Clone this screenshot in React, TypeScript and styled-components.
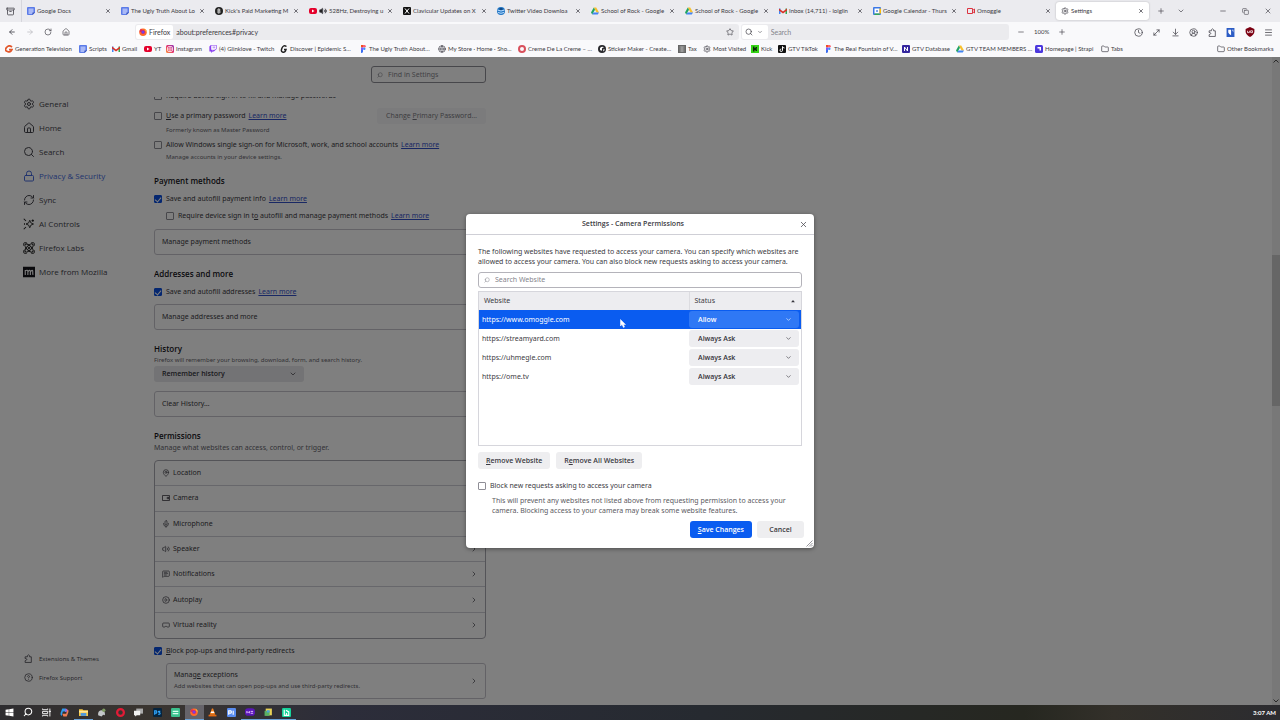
import React from "react";
import styled, { createGlobalStyle, css } from "styled-components";
import {
  ArrowLeft, ArrowRight, ArrowDownToLine, ChevronDown, ChevronRight, CirclePlay,
  CircleHelp, CircleUserRound, Clock, Folder, Globe, House, Lock, MapPin, Menu, Mic, Minus, Plus,
  RectangleGoggles, RotateCw, Search, Settings, Star, Copy, Volume2, X, Archive,
  MessageSquareText, RefreshCw, MoveDiagonal,
} from "lucide-react";
import { FaTwitch, FaWindows } from "react-icons/fa";

const Global = createGlobalStyle`
  * { box-sizing: border-box; }
  html, body { margin: 0; padding: 0; }
  body {
    font-family: "Noto Sans", "Open Sans", sans-serif;
    font-size: 7px;
    line-height: 10px;
    color: #3b3a42;
  }
  button, input, select, table { font: inherit; color: inherit; }
  button, input, select { margin: 0; }
  svg { display: block; flex: none; }
`;

const Window = styled.div`
  display: flex;
  flex-direction: column;
  height: 100vh;
  overflow: hidden;
  background: #fff;
`;

/* ---------- browser chrome ---------- */

const Chrome = styled.header`
  flex: none;
  font-family: Lato, "Open Sans", sans-serif;
`;
const TabStrip = styled.div`
  display: flex;
  align-items: center;
  height: 22px;
  background: #ebebef;
`;
const FirefoxView = styled.button`
  display: grid;
  place-items: center;
  width: 22px;
  height: 22px;
  padding: 0;
  border: 0;
  border-right: 1px solid #d6d6dc;
  background: none;
`;
const Tab = styled.div<{ $active?: boolean }>`
  display: flex;
  align-items: center;
  gap: 2px;
  flex: 0 1 94px;
  min-width: 0;
  height: 18px;
  padding: 0 5px;
  border-radius: 3px;
  font-size: 6px;
  ${(p) => p.$active && css`
    flex-basis: 93px;
    background: #fff;
    box-shadow: 0 0 2px rgba(0, 0, 0, 0.25);
  `}
`;
const TabTitle = styled.span`
  flex: 1;
  min-width: 0;
  white-space: nowrap;
`;
const PlainButton = styled.button`
  display: grid;
  place-items: center;
  padding: 0;
  border: 0;
  background: none;
  color: #45444c;
`;
const StripTools = styled.div<{ $gap: number; $push?: boolean }>`
  display: flex;
  align-items: center;
  gap: ${(p) => p.$gap}px;
  padding: 0 8px;
  margin-left: ${(p) => (p.$push ? "auto" : "0")};
`;

const NavBar = styled.div`
  display: flex;
  align-items: center;
  height: 20px;
  background: #f9f9fb;
`;
const NavButtons = styled.div`
  display: flex;
  align-items: center;
  gap: 10px;
  flex: none;
  width: 135px;
  padding-left: 8px;
`;
const AddressBar = styled.div`
  display: flex;
  align-items: center;
  flex: 606 1 0;
  min-width: 0;
  height: 16px;
  padding: 1px 5px 1px 1px;
  border-radius: 3px;
  background: #ebebee;
`;
const Identity = styled.button`
  display: flex;
  align-items: center;
  gap: 2px;
  height: 14px;
  padding: 0 3px;
  border: 0;
  border-radius: 2px;
  background: #fff;
`;
const BareInput = styled.input`
  flex: 1;
  min-width: 0;
  padding: 0 3px;
  border: 0;
  outline: 0;
  background: none;
  &::placeholder { color: #85848c; opacity: 1; }
`;
const SearchBar = styled(AddressBar)`
  flex: 266 1 0;
  margin-left: 2px;
`;
const Engine = styled(Identity)`
  width: 26px;
  gap: 4px;
`;
const NavTools = styled.div`
  display: flex;
  align-items: center;
  justify-content: space-between;
  flex: none;
  width: 271px;
  padding: 0 7px 0 8px;
`;
const Zoom = styled.div`
  display: flex;
  align-items: center;
  gap: 9px;
  font-size: 6px;
`;
const Extensions = styled.div`
  display: flex;
  align-items: center;
  justify-content: space-between;
  width: 139px;
`;

const BookmarkBar = styled.nav`
  display: flex;
  align-items: center;
  height: 15px;
  padding: 0 6px 1px 5px;
  background: #f9f9fb;
`;
const Bookmark = styled.a<{ $w: number; $last?: boolean }>`
  display: flex;
  align-items: center;
  gap: 2px;
  flex: 0 1 ${(p) => p.$w}px;
  min-width: 0;
  margin-left: ${(p) => (p.$last ? "auto" : "0")};
  font-size: 6px;
  color: #3b3a42;
  text-decoration: none;
  white-space: nowrap;
`;

/* ---------- settings page ---------- */

const Page = styled.div`
  position: relative;
  display: flex;
  flex: 1;
  min-height: 0;
  overflow: hidden;
  background: #fff;
`;
const Sidebar = styled.nav`
  display: flex;
  flex-direction: column;
  justify-content: space-between;
  width: 154px;
  padding: 35px 0 18px 23px;
  font-family: "Open Sans", "Noto Sans", sans-serif;
`;
const NavGroup = styled.div`
  display: flex;
  flex-direction: column;
`;
const Category = styled.a<{ $selected?: boolean; $small?: boolean }>`
  display: flex;
  align-items: center;
  gap: 4px;
  height: ${(p) => (p.$small ? 19 : 24)}px;
  padding-left: ${(p) => (p.$small ? 1 : 0)}px;
  font-size: ${(p) => (p.$small ? 6 : 8)}px;
  color: ${(p) => (p.$selected ? "#4468dc" : "#45444c")};
  text-decoration: none;
  svg { margin-right: ${(p) => (p.$small ? 2 : 0)}px; }
`;
const Main = styled.main`
  display: flex;
  flex-direction: column;
  width: 332px;
  padding-top: 9px;
`;
const FindBox = styled.label`
  display: flex;
  align-items: center;
  align-self: flex-end;
  gap: 2px;
  width: 115px;
  height: 17px;
  padding: 0 5px;
  border: 1px solid #8f8e96;
  border-radius: 3px;
`;
const ScrollArea = styled.div`
  flex: 1;
  min-height: 0;
  margin-top: 14px;
  overflow: hidden;
`;
const Option = styled.div<{ $top: number; $h?: number; $indent?: boolean }>`
  display: flex;
  align-items: center;
  gap: 3px;
  height: ${(p) => p.$h ?? 16}px;
  margin-top: ${(p) => p.$top}px;
  padding-left: ${(p) => (p.$indent ? 12 : 0)}px;
  white-space: nowrap;
`;
const OptionLabel = styled.label`
  display: flex;
  align-items: center;
  gap: 4px;
`;
const Tick = styled.input`
  appearance: none;
  display: grid;
  place-items: center;
  flex: none;
  width: 8px;
  height: 8px;
  border: 1px solid #8f8e96;
  border-radius: 1px;
  background: #fff;
  &:checked { border-color: #0a4fe0; background: #0a4fe0; }
  &:checked::after {
    content: "";
    width: 3px;
    height: 5px;
    border: solid #fff;
    border-width: 0 1px 1px 0;
    transform: rotate(40deg);
  }
`;
const Link = styled.a`
  color: #3350c8;
  text-decoration: underline;
`;
const Note = styled.p<{ $indent?: boolean; $h: number; $wide?: boolean }>`
  height: ${(p) => p.$h}px;
  margin: 0;
  padding-left: ${(p) => (p.$indent ? 12 : 0)}px;
  font-size: ${(p) => (p.$wide ? 7 : 6)}px;
  line-height: ${(p) => p.$h}px;
  color: #66656d;
  white-space: nowrap;
`;
const Heading = styled.h2`
  margin: 12px 0 0;
  font-family: "Open Sans", "Noto Sans", sans-serif;
  font-size: 8px;
  font-weight: 600;
  line-height: 14px;
  color: #15141a;
`;
const GreyButton = styled.button`
  height: 17px;
  padding: 0 8px;
  border: 0;
  border-radius: 3px;
  background: #eeeef0;
  font-family: "Open Sans", "Noto Sans", sans-serif;
  font-weight: 600;
  white-space: nowrap;
`;
const PrimaryPassword = styled(GreyButton)`
  height: 16px;
  width: 109px;
  padding: 0;
  margin-left: auto;
  font-weight: 400;
  color: #77767e;
  background: #f6f6f8;
`;
const BoxButton = styled.button<{ $top: number; $tall?: boolean }>`
  display: flex;
  align-items: center;
  justify-content: space-between;
  width: ${(p) => (p.$tall ? "calc(100% - 12px)" : "100%")};
  height: ${(p) => (p.$tall ? 36 : 26)}px;
  margin: ${(p) => p.$top}px 0 0 ${(p) => (p.$tall ? 12 : 0)}px;
  padding: 0 7px;
  border: 1px solid #c6c5cc;
  border-radius: 3px;
  background: none;
  text-align: left;
`;
const BoxText = styled.span`
  display: flex;
  flex-direction: column;
`;
const SelectWrap = styled.div<{ $w?: number }>`
  display: grid;
  align-items: center;
  width: ${(p) => (p.$w ? p.$w + "px" : "auto")};
  > * { grid-area: 1 / 1; }
  > svg { justify-self: end; margin-right: 7px; pointer-events: none; }
`;
const Select = styled.select<{ $blue?: boolean }>`
  appearance: none;
  width: 100%;
  height: 17px;
  padding: 0 9px;
  border: 0;
  border-radius: 3px;
  background: ${(p) => (p.$blue ? "#2f78f5" : "#ededf0")};
  color: ${(p) => (p.$blue ? "#fff" : "#33323a")};
  font-family: "Open Sans", "Noto Sans", sans-serif;
  font-weight: 600;
  & + svg { color: ${(p) => (p.$blue ? "#fff" : "#33323a")}; }
`;
const HistorySelect = styled(Select)`
  height: 16px;
  padding: 0 8px;
  background: #e6e6ea;
`;
const PermissionList = styled.div`
  display: grid;
  grid-auto-rows: 1fr;
  height: 179px;
  margin-top: 7px;
  border: 1px solid #a9a8b0;
  border-radius: 4px;
`;
const Permission = styled.button`
  display: flex;
  align-items: center;
  gap: 3px;
  padding: 0 7px;
  border: 0;
  border-bottom: 1px solid #cfcfd6;
  background: none;
  text-align: left;
  &:last-child { border-bottom: 0; }
  > :last-child { margin-left: auto; }
`;
const ScrollTrack = styled.div`
  display: flex;
  flex-direction: column;
  justify-content: space-between;
  align-items: center;
  width: 8px;
  margin-left: auto;
  background: #f0f0f0;
`;
const Thumb = styled.div`
  width: 8px;
  height: 151px;
  margin-bottom: 101px;
  background: #cdcdcd;
`;

/* ---------- dialog ---------- */

const Backdrop = styled.div`
  position: absolute;
  inset: 0;
  display: grid;
  place-items: center;
  background: rgba(0, 0, 0, 0.5);
`;
const DialogHolder = styled.div`
  position: relative;
`;
const Dialog = styled.section`
  width: 348px;
  border-radius: 4px;
  background: #fff;
  box-shadow: 0 1px 4px rgba(0, 0, 0, 0.4);
`;
const TitleBar = styled.header`
  display: grid;
  grid-template-columns: 8px 1fr 22px;
  align-items: center;
  height: 21px;
  border-bottom: 1px solid #cfcfd6;
  text-align: center;
`;
const DialogTitle = styled.h1`
  margin: 0;
  font-family: "Open Sans", "Noto Sans", sans-serif;
  font-size: 7px;
  font-weight: 600;
  line-height: 10px;
`;
const DialogBody = styled.div`
  padding: 12px 12px 0;
`;
const Intro = styled.p`
  margin: 0;
  white-space: nowrap;
`;
const SiteSearch = styled(FindBox)`
  width: 100%;
  height: 16px;
  margin: 5px 0 3px;
  border-color: #b4b3ba;
`;
const SiteFrame = styled.div`
  height: 155px;
  border: 1px solid #d6d6dc;
`;
const SiteTable = styled.table`
  width: 100%;
  border-collapse: collapse;
  table-layout: fixed;
`;
const HeadCell = styled.th<{ $w?: number }>`
  width: ${(p) => (p.$w ? p.$w + "px" : "auto")};
  height: 18px;
  padding: 0 5px;
  border-left: ${(p) => (p.$w ? "1px solid #dcdce0" : "0")};
  background: #ededf0;
  font-weight: 400;
  text-align: left;
`;
const HeadInner = styled.div`
  display: flex;
  align-items: center;
  justify-content: space-between;
`;
const SiteRow = styled.tr<{ $selected?: boolean }>`
  height: 19px;
  background: ${(p) => (p.$selected ? "#0a5cf0" : "transparent")};
  color: ${(p) => (p.$selected ? "#fff" : "#3b3a42")};
`;
const Cell = styled.td<{ $status?: boolean }>`
  padding: ${(p) => (p.$status ? "1px 2px 1px 0" : "0 3px")};
`;
const ButtonRow = styled.div`
  display: flex;
  gap: 6px;
  margin-top: 6px;
`;
const BlockNote = styled(Intro)`
  margin: 2px 0 0 14px;
  color: #5b5a62;
`;
const Footer = styled.footer`
  display: flex;
  justify-content: flex-end;
  gap: 5px;
  padding: 5px 10px 10px;
`;
const SaveButton = styled(GreyButton)`
  background: #0a5cf0;
  color: #fff;
`;
const CancelButton = styled(GreyButton)`
  width: 47px;
`;
const Grip = styled.svg`
  position: absolute;
  right: 1px;
  bottom: 1px;
`;
const Pointer = styled.svg`
  position: absolute;
  left: 154px;
  top: 105px;
`;

/* ---------- taskbar ---------- */

const Taskbar = styled.footer`
  display: flex;
  align-items: center;
  justify-content: space-between;
  height: 15px;
  flex: none;
  padding-right: 4px;
  background: linear-gradient(to right, #2e2d30, #3a3530 12%, #2c2d3a 27%, #262a30 55%, #262720 80%, #33302a 87%, #2c2c30);
`;
const Apps = styled.div`
  display: grid;
  grid-template-columns: repeat(16, 1fr);
  width: 296px;
  height: 15px;
`;
const AppButton = styled.button<{ $open?: boolean; $front?: boolean }>`
  display: grid;
  place-items: center;
  padding: 0;
  border: 0;
  border-bottom: 1px solid ${(p) => (p.$open ? "#6ba3d8" : "transparent")};
  background: ${(p) => (p.$front ? "#66646a" : "none")};
`;
const ClockText = styled.time`
  font-family: Lato, "Open Sans", sans-serif;
  font-size: 6px;
  font-weight: 700;
  color: #fff;
`;

/* ---------- small drawings ---------- */

const Svg = ({ children, s = 8 }: { children: React.ReactNode; s?: number }) => (
  <svg width={s} height={s} viewBox="0 0 16 16" aria-hidden="true">{children}</svg>
);
const Flipped = styled(Search)`
  transform: scaleX(-1);
`;

const ExtensionIcon = ({ s = 9 }: { s?: number }) => (
  <Svg s={s}><path d="M2 5h4V3q2-3 4 0v2h3v10H2v-3q3-1 3-2.500T2 8z" fill="none" stroke="#45444c" strokeWidth="1.400" strokeLinejoin="round" /></Svg>
);

const Glyph = ({ name }: { name: string }) => {
  switch (name) {
    case "docs":
      return <Svg><path d="M2 0h12q2 0 2 2v9l-5 5H2q-2 0-2-2V2q0-2 2-2z" fill="#5b7be8" /><path d="M3 3h10v8l-3 3H3z" fill="#a9b9f6" /><path d="M11 16v-5h5z" fill="#3853b8" /></Svg>;
    case "kickpay":
      return <Svg><circle cx="8" cy="8" r="8" fill="#222" /><path d="M6 4v8M6 4h3q2 2 0 4H6m3 0q3 2 0 4H6" stroke="#fff" strokeWidth="1.6" fill="none" /></Svg>;
    case "youtube":
      return <Svg><rect y="2" width="16" height="12" rx="4" fill="#e4002b" /><path d="M6 5l5 3-5 3z" fill="#fff" /></Svg>;
    case "x":
      return <Svg><rect width="16" height="16" rx="2" fill="#111" /><path d="M4 3l8 10M12 3l-8 10" stroke="#fff" strokeWidth="2" /></Svg>;
    case "download":
      return <Svg><circle cx="8" cy="8" r="8" fill="#2276c4" /><path d="M1 6q7 4 14 0M2 11q6 3 12 0" stroke="#bfe0ff" strokeWidth="2" fill="none" /><path d="M5 2h6v4H5z" fill="#134a86" /></Svg>;
    case "drive":
      return <Svg><path d="M5.500 1h5L16 11h-5z" fill="#f7c02d" /><path d="M5.500 1L0 11l2.500 4L8 5.500z" fill="#1fa463" /><path d="M2.500 15h11l2.500-4H5z" fill="#4284f4" /></Svg>;
    case "gmail":
      return <Svg><path d="M0 3h3v11H0z" fill="#4285f4" /><path d="M13 3h3v11h-3z" fill="#34a853" /><path d="M0 3l8 6 8-6v4l-8 6-8-6z" fill="#d93025" /></Svg>;
    case "calendar":
      return <Svg><rect width="16" height="16" rx="2" fill="#3c78e6" /><rect x="3" y="3" width="10" height="10" fill="#fff" /><path d="M3 13h10v3H3z" fill="#34a853" /><path d="M13 3h3v10h-3z" fill="#fbbc04" /><path d="M6 6h4v4H6z" fill="#7ca3ef" /></Svg>;
    case "omoggle":
      return <Svg><path d="M1 3h10v10H1zM11 7l4-3v8l-4-3z" fill="none" stroke="#dc3340" strokeWidth="2" /></Svg>;
    case "firefox":
      return <Svg><circle cx="8" cy="8.500" r="7.500" fill="#ff6a2b" /><path d="M1 8q0-4 3-7 1 3 4 3 5 1 4 5-1 3-4 3-4 0-4-4z" fill="#e2295a" /><circle cx="8" cy="8" r="3" fill="#7542e5" /><path d="M11 1q5 3 4.500 8L13 6z" fill="#ffc83d" /></Svg>;
    case "g":
      return <Svg><path d="M14 4Q8-1 3 5t2 8q6 3 9-4H8" fill="none" stroke="#e2572b" strokeWidth="3.500" /></Svg>;
    case "instagram":
      return <Svg><defs><linearGradient id="ig" x1="0" y1="1" x2="1" y2="0"><stop offset="0" stopColor="#fd9a3c" /><stop offset=".5" stopColor="#e1306c" /><stop offset="1" stopColor="#8a3ab9" /></linearGradient></defs><rect width="16" height="16" rx="3" fill="url(#ig)" /><rect x="3" y="3" width="10" height="10" rx="3" fill="none" stroke="#fff" strokeWidth="1.500" /><circle cx="8" cy="8" r="2.500" fill="none" stroke="#fff" strokeWidth="1.500" /></Svg>;
    case "twitch":
      return <FaTwitch size={8} color="#8a3ff0" />;
    case "epidemic":
      return <Svg><path d="M13 3Q7-1 4 6t1 8q5 2 7-5H8" fill="none" stroke="#222" strokeWidth="3" /></Svg>;
    case "figma":
      return <Svg><path d="M8 0H4v5h4z" fill="#f24e1e" /><path d="M8 0h3a2.500 2.500 0 010 5H8z" fill="#ff5f6d" /><path d="M8 5H4v5h4z" fill="#7a59ff" /><circle cx="10.500" cy="7.500" r="2.500" fill="#3a8dfe" /><path d="M8 10H4v6q4 0 4-3z" fill="#3a6df0" /></Svg>;
    case "globe":
      return <Globe size={8} strokeWidth={2} />;
    case "creme":
      return <Svg><circle cx="8" cy="8" r="6" fill="none" stroke="#d8505c" strokeWidth="4" /></Svg>;
    case "sticker":
      return <Svg><circle cx="8" cy="8" r="8" fill="#2a2a2e" /><path d="M4 6q4-4 8-1-5 0-4 4t-4 1zM10 9h4l-3 4z" fill="#fff" /></Svg>;
    case "tax":
      return <Svg><rect width="16" height="16" fill="#666" /><path d="M3 4h10M3 8h10M3 12h10M8 3v11" stroke="#bbb" strokeWidth="1.500" /></Svg>;
    case "gear":
      return <Settings size={8} strokeWidth={2} />;
    case "kick":
      return <Svg><rect width="16" height="16" fill="#35d416" /><path d="M4 3h3v3h2V4h3v3l-2 1 2 1v3H9v-2H7v3H4z" fill="#0c2a07" /></Svg>;
    case "tiktok":
      return <Svg><rect width="16" height="16" rx="2" fill="#111" /><path d="M9 3v7.500A2.500 2.500 0 116.500 8M9 3q1 3 4 3" stroke="#fff" strokeWidth="2" fill="none" /></Svg>;
    case "notion":
      return <Svg><rect width="16" height="16" rx="2" fill="#33259e" /><path d="M5 12V4l6 8V4" stroke="#fff" strokeWidth="2" fill="none" /></Svg>;
    case "strapi":
      return <Svg><rect width="16" height="16" rx="3" fill="#4b37dd" /><path d="M5 4h7v7H9V7H5z" fill="#fff" /></Svg>;
    case "folder":
      return <Folder size={8} strokeWidth={2} />;
    default:
      return null;
  }
};

const SparkIcon = () => (
  <Svg s={12}>
    <path d="M9 3l1.500 3.500L14 8l-3.500 1.500L9 13l-1.500-3.500L4 8l3.500-1.500z" fill="none" stroke="#222" strokeWidth="1.200" strokeLinejoin="round" />
    <path d="M1 1l3 3M1 15l3-3M13 2v3M11.500 3.500h3M2 7v2" stroke="#222" strokeWidth="1.400" />
  </Svg>
);
const LabsIcon = () => (
  <Svg s={12}>
    <g fill="none" stroke="#222" strokeWidth="1.300">
      <path d="M1 5V2q0-1 1-1h3M11 1h3q1 0 1 1v3M15 11v3q0 1-1 1h-3M5 15H2q-1 0-1-1v-3" />
      <ellipse cx="8" cy="8" rx="7" ry="3" transform="rotate(45 8 8)" />
      <ellipse cx="8" cy="8" rx="7" ry="3" transform="rotate(-45 8 8)" />
      <circle cx="8" cy="8" r="1" fill="#222" />
    </g>
  </Svg>
);
const MozillaIcon = () => (
  <Svg s={12}>
    <rect y="1" width="16" height="14" fill="#15141a" />
    <path d="M3 12V6h1q2-1 2.500 1V12M6.500 8Q9 4 9.800 7v5M9.800 8Q13 4 13 7v4h1" fill="none" stroke="#fff" strokeWidth="1.500" />
  </Svg>
);

/* ---------- data ---------- */

const tabs: [string, string][] = [
  ["docs", "Google Docs"],
  ["docs", "The Ugly Truth About Lo"],
  ["kickpay", "Kick's Paid Marketing M"],
  ["youtube", "528Hz, Destroying u"],
  ["x", "Clavicular Updates on X"],
  ["download", "Twitter Video Downloa"],
  ["drive", "School of Rock - Google"],
  ["drive", "School of Rock - Google"],
  ["gmail", "Inbox (14,711) - lolglin"],
  ["calendar", "Google Calendar - Thurs"],
  ["omoggle", "Omoggle"],
];

const bookmarks: [string, string, number][] = [
  ["g", "Generation Television", 74],
  ["docs", "Scripts", 33],
  ["gmail", "Gmail", 32],
  ["youtube", "YT", 22],
  ["instagram", "Instagram", 43],
  ["twitch", "(4) Glinklove - Twitch", 71],
  ["epidemic", "Discover | Epidemic S…", 79],
  ["figma", "The Ugly Truth About…", 79],
  ["globe", "My Store · Home · Sho…", 80],
  ["creme", "Creme De La Creme – …", 80],
  ["sticker", "Sticker Maker - Create…", 80],
  ["tax", "Tax", 25],
  ["gear", "Most Visited", 48],
  ["kick", "Kick", 27],
  ["tiktok", "GTV TikTok", 46],
  ["figma", "The Real Fountain of V…", 78],
  ["notion", "GTV Database", 54],
  ["drive", "GTV TEAM MEMBERS …", 79],
  ["strapi", "Homepage | Strapi", 66],
  ["folder", "Tabs", 30],
];

const categories: [string, React.ReactNode][] = [
  ["General", <Settings size={12} strokeWidth={2} />],
  ["Home", <House size={12} strokeWidth={2} />],
  ["Search", <Search size={12} strokeWidth={2} />],
  ["Privacy & Security", <Lock size={12} strokeWidth={2} />],
  ["Sync", <RefreshCw size={12} strokeWidth={2} />],
  ["AI Controls", <SparkIcon />],
  ["Firefox Labs", <LabsIcon />],
  ["More from Mozilla", <MozillaIcon />],
];

const permissions: [string, React.ReactNode][] = [
  ["Location", <MapPin size={8} />],
  ["Camera", <Svg><path d="M1 3h14v10H1zM10 7l3-1v4l-3-1z" fill="none" stroke="#33323a" strokeWidth="1.500" /></Svg>],
  ["Microphone", <Mic size={8} />],
  ["Speaker", <Volume2 size={8} />],
  ["Notifications", <MessageSquareText size={8} />],
  ["Autoplay", <CirclePlay size={8} />],
  ["Virtual reality", <RectangleGoggles size={8} />],
];

const sites = [
  ["https://www.omoggle.com", "Allow"],
  ["https://streamyard.com", "Always Ask"],
  ["https://uhmegle.com", "Always Ask"],
  ["https://ome.tv", "Always Ask"],
];

const Badge = ({ bg, fg, children }: { bg: string; fg: string; children: React.ReactNode }) => (
  <Svg s={9}><rect width="16" height="16" rx="2" fill={bg} /><g stroke={fg} strokeWidth="2" fill="none">{children}</g></Svg>
);

const apps: { name: string; icon: React.ReactNode; open?: boolean; front?: boolean }[] = [
  { name: "Start", icon: <FaWindows size={9} color="#fff" /> },
  { name: "Search", icon: <Flipped size={10} color="#fff" strokeWidth={2.5} /> },
  { name: "Task view", icon: <Svg s={9}><path d="M1 1v2h9V1M1 15v-2h9v2M1 6h9v4H1zM14 1v14M12 6h4" stroke="#fff" strokeWidth="1.600" fill="none" /></Svg> },
  { name: "Copilot", icon: <Svg s={9}><path d="M4 1h6l2 5H5l-2 8Q0 13 1 9z" fill="#2f9bea" /><path d="M12 15H6l-2-5h7l2-8q3 1 2 5z" fill="#ee7d52" /><path d="M10 1q3 0 3 4l-2 2H9z" fill="#a765e0" /></Svg> },
  { name: "Files", open: true, icon: <Svg s={9}><path d="M0 2h6l2 2h8v10H0z" fill="#f6c844" /><path d="M3 9h10v5H3z" fill="#4a98e0" /><path d="M0 5h16v3H0z" fill="#ffe79a" /></Svg> },
  { name: "Game", icon: <Svg s={9}><path d="M2 13q-1-9 7-9 6 1 5 9l-3-1-3 3z" fill="#c3c7c9" /><circle cx="12" cy="4" r="3" fill="#7e9b62" /></Svg> },
  { name: "Opera", icon: <Svg s={9}><circle cx="8" cy="8" r="6" fill="none" stroke="#e31b36" strokeWidth="4" /></Svg> },
  { name: "Chat", icon: <Svg s={9}><path d="M4 1h12v9H4z" fill="#aaa" /><path d="M0 5h11v8H5l-3 2v-2H0z" fill="#f1f1f1" /></Svg> },
  { name: "Photoshop", icon: <Badge bg="#06243e" fg="#31a8ff"><path d="M3 12V5h3q2 2 0 4H3M13 6q-4-1-3 1 4 2 2 4H9" /></Badge> },
  { name: "Stream", icon: <Badge bg="#3cc28e" fg="#d9fff0"><path d="M3 6h10M3 10h10" /></Badge> },
  { name: "Firefox", open: true, front: true, icon: <Glyph name="firefox" /> },
  { name: "VLC", icon: <Svg s={9}><path d="M7 1h2l4 11H3z" fill="#f58220" /><path d="M5.500 6h5l1 3h-7z" fill="#fff" /><path d="M1 12h14v3H1z" fill="#e66a10" /></Svg> },
  { name: "Docs", icon: <Badge bg="#5a8df0" fg="#fff"><path d="M3 12V5h4q2 2 0 4H3M11 5v7" /></Badge> },
  { name: "Media", open: true, icon: <Svg s={10}><rect y="2" width="16" height="12" rx="5" fill="#5a16b8" /><path d="M3 10V7l2 2 2-2v3M9 7h4M9 10h4" stroke="#e7c7ff" strokeWidth="1.500" fill="none" /></Svg> },
  { name: "Notes", open: true, icon: <Svg s={9}><path d="M3 1h11v12H3z" fill="#e8d256" /><path d="M1 5h9v9H1z" fill="#5ab063" /><path d="M5 4h5v4H5z" fill="#4aa3d8" /></Svg> },
  { name: "Recorder", open: true, icon: <Badge bg="#17d39b" fg="#fff"><path d="M4 3v10h8V7l-5-3M8 13V9" /></Badge> },
];

const More = () => <Link href="#">Learn more</Link>;

/* ---------- page ---------- */

export default function App() {
  return (
    <>
      <Global />
      <Window>
        <Chrome>
          <TabStrip>
            <FirefoxView aria-label="Firefox View"><Archive size={9} strokeWidth={2} /></FirefoxView>
            {tabs.map(([icon, title], i) => (
              <Tab key={i}>
                <Glyph name={icon} />
                {icon === "youtube" && <Volume2 size={8} fill="#222" />}
                <TabTitle>{title}</TabTitle>
                <PlainButton aria-label="Close tab"><X size={6} strokeWidth={3} /></PlainButton>
              </Tab>
            ))}
            <Tab $active>
              <Glyph name="gear" />
              <TabTitle>Settings</TabTitle>
              <PlainButton aria-label="Close tab"><X size={6} strokeWidth={3} /></PlainButton>
            </Tab>
            <StripTools $gap={12}>
              <PlainButton aria-label="New tab"><Plus size={8} /></PlainButton>
              <PlainButton aria-label="List all tabs"><ChevronDown size={8} /></PlainButton>
            </StripTools>
            <StripTools $gap={15} $push>
              <PlainButton aria-label="Minimize"><Minus size={8} /></PlainButton>
              <PlainButton aria-label="Restore"><Copy size={7} /></PlainButton>
              <PlainButton aria-label="Close"><X size={8} /></PlainButton>
            </StripTools>
          </TabStrip>

          <NavBar>
            <NavButtons>
              <PlainButton aria-label="Back"><ArrowLeft size={8} strokeWidth={2.5} /></PlainButton>
              <PlainButton aria-label="Forward" disabled><ArrowRight size={8} color="#b4b3ba" /></PlainButton>
              <PlainButton aria-label="Reload"><RotateCw size={8} /></PlainButton>
              <PlainButton aria-label="Home"><House size={8} /></PlainButton>
            </NavButtons>
            <AddressBar>
              <Identity><Glyph name="firefox" />Firefox</Identity>
              <BareInput aria-label="Address" defaultValue="about:preferences#privacy" />
              <PlainButton aria-label="Bookmark this page"><Star size={8} /></PlainButton>
            </AddressBar>
            <SearchBar>
              <Engine aria-label="Search engine"><Search size={8} /><ChevronDown size={6} /></Engine>
              <BareInput aria-label="Search the web" placeholder="Search" />
            </SearchBar>
            <NavTools>
              <Zoom>
                <PlainButton aria-label="Zoom out"><Minus size={8} /></PlainButton>
                100%
                <PlainButton aria-label="Zoom in"><Plus size={8} /></PlainButton>
              </Zoom>
              <Extensions>
                <PlainButton aria-label="History"><Clock size={9} /></PlainButton>
                <PlainButton aria-label="Resize"><MoveDiagonal size={9} /></PlainButton>
                <PlainButton aria-label="Downloads"><ArrowDownToLine size={9} /></PlainButton>
                <PlainButton aria-label="Account"><CircleUserRound size={9} /></PlainButton>
                <PlainButton aria-label="Extensions"><ExtensionIcon /></PlainButton>
                <PlainButton aria-label="Password manager"><Svg s={9}><path d="M1 0h14v16H1z" fill="#2c5cc5" /><path d="M4 3h5v10q-4-2-5-5zM11 3h2v5" fill="#fff" /></Svg></PlainButton>
                <PlainButton aria-label="Content blocker"><Svg s={10}><path d="M8 0l7 3v5q-1 5-7 8-6-3-7-8V3z" fill="#7b0012" /><path d="M4 6v3h3V6M9 9V6h3v3z" stroke="#fff" strokeWidth="1.200" fill="none" /></Svg></PlainButton>
                <PlainButton aria-label="Menu"><Menu size={9} /></PlainButton>
              </Extensions>
            </NavTools>
          </NavBar>

          <BookmarkBar aria-label="Bookmarks">
            {bookmarks.map(([icon, title, w], i) => (
              <Bookmark href="#" key={i} $w={w}><Glyph name={icon} />{title}</Bookmark>
            ))}
            <Bookmark href="#" $w={57} $last><Glyph name="folder" />Other Bookmarks</Bookmark>
          </BookmarkBar>
        </Chrome>

        <Page>
          <Sidebar aria-label="Settings categories">
            <NavGroup>
              {categories.map(([name, icon]) => (
                <Category href="#" key={name} $selected={name.startsWith("Privacy")}>{icon}{name}</Category>
              ))}
            </NavGroup>
            <NavGroup>
              <Category href="#" $small><ExtensionIcon />Extensions &amp; Themes</Category>
              <Category href="#" $small><CircleHelp size={9} />Firefox Support</Category>
            </NavGroup>
          </Sidebar>

          <Main>
            <FindBox><Flipped size={6} color="#77767e" /><BareInput placeholder="Find in Settings" aria-label="Find in Settings" /></FindBox>
            <ScrollArea>
              <Option $top={-9}><OptionLabel><Tick type="checkbox" />Require device sign in to fill and manage passwords</OptionLabel></Option>
              <Option $top={4}>
                <OptionLabel><Tick type="checkbox" /><span><u>U</u>se a primary password</span></OptionLabel><More />
                <PrimaryPassword disabled>Change <u>P</u>rimary Password…</PrimaryPassword>
              </Option>
              <Note $indent $h={12}>Formerly known as Master Password</Note>
              <Option $top={2} $h={14}><OptionLabel><Tick type="checkbox" />Allow Windows single sign-on for Microsoft, work, and school accounts</OptionLabel><More /></Option>
              <Note $indent $h={10}>Manage accounts in your device settings.</Note>

              <Heading>Payment methods</Heading>
              <Option $top={3}><OptionLabel><Tick type="checkbox" defaultChecked />Save and autofill payment info</OptionLabel><More /></Option>
              <Option $top={1} $indent><OptionLabel><Tick type="checkbox" /><span>Require device sign in t<u>o</u> autofill and manage payment methods</span></OptionLabel><More /></Option>
              <BoxButton $top={5}>Manage payment methods<ChevronRight size={8} /></BoxButton>

              <Heading>Addresses and more</Heading>
              <Option $top={3}><OptionLabel><Tick type="checkbox" defaultChecked />Save and autofill addresses</OptionLabel><More /></Option>
              <BoxButton $top={4}>Manage addresses and more<ChevronRight size={8} /></BoxButton>

              <Heading>History</Heading>
              <Note $h={8}>Firefox will remember your browsing, download, form, and search history.</Note>
              <Option $top={2}>
                <SelectWrap $w={150}>
                  <HistorySelect aria-label="History mode"><option>Remember history</option></HistorySelect>
                  <ChevronDown size={8} />
                </SelectWrap>
              </Option>
              <BoxButton $top={9}>Clear History…<ChevronRight size={8} /></BoxButton>

              <Heading>Permissions</Heading>
              <Note $h={10} $wide>Manage what websites can access, control, or trigger.</Note>
              <PermissionList>
                {permissions.map(([name, icon]) => (
                  <Permission key={name}>{icon}<span>{name}</span><ChevronRight size={8} /></Permission>
                ))}
              </PermissionList>
              <Option $top={4}><OptionLabel><Tick type="checkbox" defaultChecked /><span><u>B</u>lock pop-ups and third-party redirects</span></OptionLabel></Option>
              <BoxButton $top={4} $tall>
                <BoxText>
                  <span>Manag<u>e</u> exceptions</span>
                  <Note as="span" $h={12}>Add websites that can open pop-ups and use third-party redirects.</Note>
                </BoxText>
                <ChevronRight size={8} />
              </BoxButton>
            </ScrollArea>
          </Main>

          <ScrollTrack aria-hidden="true">
            <Svg><path d="M3 11l5-5 5 5" fill="none" stroke="#555" strokeWidth="2" /></Svg>
            <Thumb />
            <Svg><path d="M3 5l5 5 5-5" fill="none" stroke="#555" strokeWidth="2" /></Svg>
          </ScrollTrack>

          <Backdrop>
            <DialogHolder>
              <Dialog role="dialog" aria-modal="true" aria-labelledby="dialog-title">
                <TitleBar>
                  <span />
                  <DialogTitle id="dialog-title">Settings - Camera Permissions</DialogTitle>
                  <PlainButton aria-label="Close"><X size={9} strokeWidth={2} /></PlainButton>
                </TitleBar>
                <DialogBody>
                  <Intro>
                    The following websites have requested to access your camera. You can specify which websites are<br />
                    allowed to access your camera. You can also block new requests asking to access your camera.
                  </Intro>
                  <SiteSearch><Flipped size={6} color="#85848c" /><BareInput placeholder="Search Website" aria-label="Search Website" /></SiteSearch>
                  <SiteFrame>
                    <SiteTable>
                      <thead>
                        <tr>
                          <HeadCell>Website</HeadCell>
                          <HeadCell $w={112}><HeadInner>Status<Svg s={6}><path d="M3 11h10L8 5z" fill="#33323a" /></Svg></HeadInner></HeadCell>
                        </tr>
                      </thead>
                      <tbody>
                        {sites.map(([url, status], i) => (
                          <SiteRow key={url} $selected={i === 0}>
                            <Cell>{url}</Cell>
                            <Cell $status>
                              <SelectWrap>
                                <Select $blue={i === 0} aria-label={`Status for ${url}`}><option>{status}</option></Select>
                                <ChevronDown size={7} />
                              </SelectWrap>
                            </Cell>
                          </SiteRow>
                        ))}
                      </tbody>
                    </SiteTable>
                  </SiteFrame>
                  <ButtonRow>
                    <GreyButton><u>R</u>emove Website</GreyButton>
                    <GreyButton>R<u>e</u>move All Websites</GreyButton>
                  </ButtonRow>
                  <Option $top={9}><OptionLabel><Tick type="checkbox" />Block new requests asking to access your camera</OptionLabel></Option>
                  <BlockNote>
                    This will prevent any websites not listed above from requesting permission to access your<br />
                    camera. Blocking access to your camera may break some website features.
                  </BlockNote>
                </DialogBody>
                <Footer>
                  <SaveButton><u>S</u>ave Changes</SaveButton>
                  <CancelButton>Cancel</CancelButton>
                </Footer>
              </Dialog>
              <Pointer width="6" height="9" viewBox="0 0 12 18" aria-hidden="true"><path d="M1 1v13l3-3 3 6 2-1-2-5h4z" fill="#fff" stroke="#fff" strokeWidth="1" /></Pointer>
              <Grip width="7" height="7" viewBox="0 0 14 14" aria-hidden="true"><path d="M1 13L13 1M6 13l7-7M10 13l3-3" stroke="#77767e" strokeWidth="1.500" /></Grip>
            </DialogHolder>
          </Backdrop>
        </Page>

        <Taskbar>
          <Apps>
            {apps.map((a) => <AppButton key={a.name} aria-label={a.name} $open={a.open} $front={a.front}>{a.icon}</AppButton>)}
          </Apps>
          <ClockText>3:07 AM</ClockText>
        </Taskbar>
      </Window>
    </>
  );
}
